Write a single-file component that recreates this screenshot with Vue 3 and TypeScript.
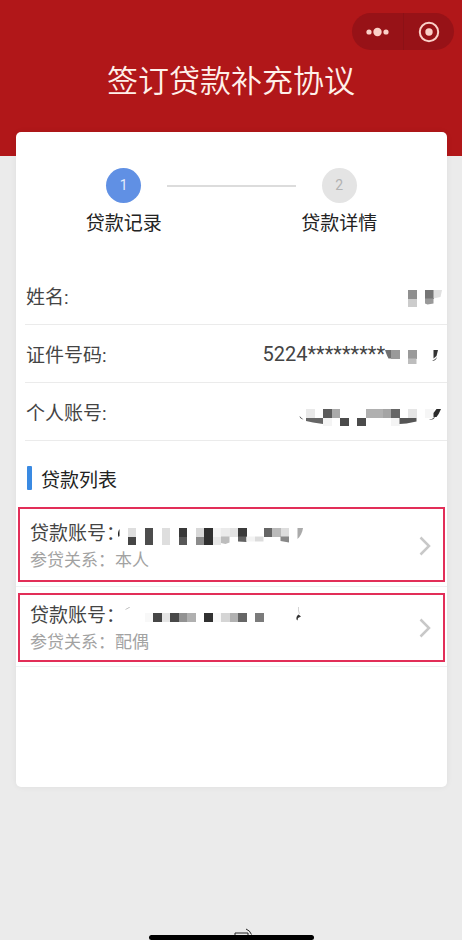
<script setup lang="ts">
interface Cell {
  x: number
  y: number
  w: number
  h: number
  fill: string
}

interface Shape {
  d: string
  fill: string
}

interface Mask {
  width: number
  height: number
  top: number
  cells: Cell[]
  shapes: Shape[]
}

interface Field {
  label: string
  value: string
  mask: Mask
}

interface Loan {
  id: number
  relation: string
  mask: Mask
}

const UNIT = 8.5

// Builds mosaic cells from [x, y, colour, columns] entries.
function cells(list: [number, number, string, number?][]): Cell[] {
  return list.map(([x, y, fill, n = 1]) => ({ x, y, w: UNIT * n, h: UNIT, fill }))
}

const fields: Field[] = [
  {
    label: '姓名:',
    value: '',
    mask: {
      width: 47,
      height: 30,
      top: 6,
      cells: cells([
        [8, 3, '#8f8f8f'],
        [8, 11.5, '#cccccc'],
        [25, 3, '#757575'],
      ]),
      shapes: [
        { d: 'M25 11.5h8.5v5l-6 1-2.5-1z', fill: '#999' },
        { d: 'M33.5 3h8.5l-1.5 7-7 1.5z', fill: '#e0e0e0' },
      ],
    },
  },
  {
    label: '证件号码:',
    value: '5224*********',
    mask: {
      width: 62,
      height: 30,
      top: 6,
      cells: cells([
        [6, 5, '#9a9a9a'],
        [23, 5, '#9a9a9a'],
      ]),
      shapes: [
        { d: 'M0 5h6v8.5H3.5Q2 11 0 5z', fill: '#707070' },
        { d: 'M23 13.5h8.5V19H23z', fill: '#bdbdbd' },
        { d: 'M48.5 5H53l-1.5 6-3 2.500z', fill: '#333' },
        { d: 'M47 16q4-2 5-4-1 4-5 4z', fill: '#444' },
      ],
    },
  },
  {
    label: '个人账号:',
    value: '',
    mask: {
      width: 149,
      height: 30,
      top: 10,
      cells: cells([
        [8, 2, '#e9e9e9'],
        [25, 2, '#5c5c5c'],
        [33.5, 2, '#aaaaaa'],
        [25, 10.5, '#f4f4f4'],
        [42, 10.5, '#4b4b4b'],
        [59, 10.5, '#4b4b4b'],
        [67.5, 2, '#b0b0b0', 2],
        [84.5, 2, '#a4a4a4'],
        [93, 2, '#666666'],
        [93, 10.5, '#f4f4f4'],
        [110, 2, '#e5e5e5'],
        [127, 2, '#f6f6f6'],
      ]),
      shapes: [
        { d: 'M1.5 9q.5 2.5 4 3.5-2-1-4-3.5z', fill: '#222' },
        { d: 'M8 11h17v6l-10-1.5L8 14z', fill: '#666' },
        { d: 'M101.5 11h17v3.5l-10 2-7 .5z', fill: '#555' },
        { d: 'M135.5 10V6l3-4h4.5q-2 5-4.5 8z', fill: '#292929' },
        { d: 'M131 12.5q4-.5 6-3-1 4-6 3z', fill: '#555' },
      ],
    },
  },
]

const loans: Loan[] = [
  {
    id: 1,
    relation: '本人',
    mask: {
      width: 188,
      height: 24,
      top: 6,
      cells: cells([
        [10.5, 0, '#dedede'],
        [10.5, 8.5, '#454545'],
        [27.5, 0, '#4d4d4d'],
        [27.5, 8.5, '#4d4d4d'],
        [44.5, 0, '#dedede'],
        [44.5, 8.5, '#dedede'],
        [61.5, 0, '#393939'],
        [61.5, 8.5, '#585858'],
        [78.5, 0, '#d8d8d8'],
        [78.5, 8.5, '#8b8b8b'],
        [87, 0, '#2f2f2f'],
        [87, 8.5, '#2f2f2f'],
        [95.5, 0, '#f3f3f3'],
        [95.5, 8.5, '#e7e7e7'],
        [104, 0, '#ebebeb'],
        [112.5, 0, '#e3e3e3'],
        [121, 0, '#3b3b3b'],
        [146.5, 0, '#656565'],
        [155, 0, '#bababa'],
        [163.5, 0, '#dddddd'],
      ]),
      shapes: [
        { d: 'M2.5 1Q0 5 1.5 9l1-1z', fill: '#222' },
        { d: 'M104 8.5h8.5v6l-4 1.5-4.5-1z', fill: '#bdbdbd' },
        { d: 'M121 8.5h8.5V14l-8.5-.5z', fill: '#626262' },
        { d: 'M129.5 8.5h8.5v5h-8.5z', fill: '#f3f3f3' },
        { d: 'M138 8.5h8.5v5H138z', fill: '#dcdcdc' },
        { d: 'M163.5 8.5h8.5v6l-8.5-1.5z', fill: '#888' },
        { d: 'M180.5 0h5.5q-1 7-5.5 11z', fill: '#aaa' },
      ],
    },
  },
  {
    id: 2,
    relation: '配偶',
    mask: {
      width: 188,
      height: 24,
      top: 4,
      cells: cells([
        [27.5, 5, '#f8f8f8'],
        [36, 5, '#464646'],
        [44.5, 5, '#e5e5e5'],
        [53, 5, '#494949'],
        [61.5, 5, '#929292'],
        [70, 5, '#b0b0b0'],
        [87, 5, '#313131'],
        [95.5, 5, '#f8f8f8'],
        [104, 5, '#d5d5d5'],
        [112.5, 5, '#b1b1b1'],
        [121, 5, '#666666'],
        [138, 5, '#7b7b7b'],
      ]),
      shapes: [
        { d: 'M8 1.5 12.5-1l.3.5L9 1.5z', fill: '#999' },
        { d: 'M180 8l1.5-1.5 2.5 2-3 1.5-.5 2.5q-2-1-.5-4.5z', fill: '#333' },
        { d: 'M181-1h.5l1 7h-.5z', fill: '#aaa' },
      ],
    },
  },
]
</script>

<template>
  <div class="page">
    <header class="top">
      <div class="capsule">
        <button type="button" class="capsule-btn" aria-label="更多">
          <svg width="24" height="22" viewBox="0 0 24 22">
            <circle cx="4" cy="11" r="2.6" />
            <circle cx="12.5" cy="11" r="4.2" />
            <circle cx="21" cy="11" r="2.6" />
          </svg>
        </button>
        <button type="button" class="capsule-btn" aria-label="关闭">
          <svg width="22" height="22" viewBox="0 0 22 22">
            <circle class="ring" cx="11" cy="11" r="9.2" />
            <circle cx="11" cy="11" r="3.7" />
          </svg>
        </button>
      </div>
      <h1 class="title">签订贷款补充协议</h1>
    </header>

    <main class="card">
      <ol class="steps">
        <li class="step active">
          <span class="dot">1</span>
          <span class="step-name">贷款记录</span>
        </li>
        <li class="line" aria-hidden="true"></li>
        <li class="step">
          <span class="dot">2</span>
          <span class="step-name">贷款详情</span>
        </li>
      </ol>

      <dl class="fields">
        <div v-for="f in fields" :key="f.label" class="field">
          <dt>{{ f.label }}</dt>
          <dd>
            <span v-if="f.value">{{ f.value }}</span>
            <svg
              class="mask"
              :width="f.mask.width"
              :height="f.mask.height"
              :viewBox="`0 ${-f.mask.top} ${f.mask.width} ${f.mask.height}`"
            >
              <rect
                v-for="(c, i) in f.mask.cells"
                :key="i"
                :x="c.x"
                :y="c.y"
                :width="c.w"
                :height="c.h"
                :fill="c.fill"
              />
              <path v-for="(s, i) in f.mask.shapes" :key="'s' + i" :d="s.d" :fill="s.fill" />
            </svg>
          </dd>
        </div>
      </dl>

      <h2 class="section">贷款列表</h2>

      <ul class="loans">
        <li v-for="l in loans" :key="l.id" class="loan-item">
          <a href="#" class="loan">
            <span class="info">
              <span class="account">
                贷款账号：
                <svg
                  class="mask account-mask"
                  :width="l.mask.width"
                  :height="l.mask.height"
                  :viewBox="`0 ${-l.mask.top} ${l.mask.width} ${l.mask.height}`"
                >
                  <rect
                    v-for="(c, i) in l.mask.cells"
                    :key="i"
                    :x="c.x"
                    :y="c.y"
                    :width="c.w"
                    :height="c.h"
                    :fill="c.fill"
                  />
                  <path v-for="(s, i) in l.mask.shapes" :key="'s' + i" :d="s.d" :fill="s.fill" />
                </svg>
              </span>
              <span class="relation">参贷关系：{{ l.relation }}</span>
            </span>
            <svg class="chevron" width="14" height="22" viewBox="0 0 14 22">
              <path d="M2.5 1.5 11 10l-8.5 8.5" />
            </svg>
          </a>
        </li>
      </ul>
    </main>

    <footer class="home">
      <svg class="home-mark" width="20" height="7" viewBox="0 0 20 7">
        <path d="M1 7V5h13v2M12 1q4 1.5 5.5 5.5" />
      </svg>
      <div class="home-bar"></div>
    </footer>
  </div>
</template>

<style>
body {
  margin: 0;
  background: #ebebeb;
}
</style>

<style scoped>
.page {
  display: flex;
  flex-direction: column;
  min-height: 100vh;
  background: #ebebeb;
  color: #444;
  font-family: Roboto, "Noto Sans CJK SC", sans-serif;
  font-size: 19px;
}

.top {
  display: flex;
  flex-direction: column;
  padding: 13px 8px 51px;
  background: #b11719;
}

.capsule {
  display: flex;
  align-self: flex-end;
  width: 102px;
  height: 37px;
  border-radius: 19px;
  background: #971217;
}

.capsule-btn {
  display: flex;
  flex: 1;
  align-items: center;
  justify-content: center;
  padding: 0;
  border: 0;
  background: none;
  fill: #fbd0c8;
}

.capsule-btn + .capsule-btn {
  border-left: 1px solid #8c1116;
}

.ring {
  fill: none;
  stroke: #fbd0c8;
  stroke-width: 2;
}

.title {
  margin: 9px 0 0;
  color: #fff0ea;
  font-size: 31px;
  font-weight: 350;
  line-height: 46px;
  text-align: center;
}

.card {
  margin: -24px 15px 0 16px;
  padding: 36px 0 120px;
  border-radius: 5px;
  background: #fff;
  box-shadow: 0 0 6px rgba(0, 0, 0, 0.06);
}

.steps {
  display: flex;
  justify-content: center;
  margin: 0;
  padding: 0;
  list-style: none;
}

.step {
  display: flex;
  flex: 0 0 20%;
  flex-direction: column;
  align-items: center;
  gap: 7px;
}

.line {
  flex: 0 0 30%;
  height: 2px;
  margin-top: 17px;
  background: #dcdcdc;
}

.dot {
  width: 35px;
  height: 35px;
  border-radius: 50%;
  background: #e4e4e4;
  color: #b2b2b2;
  font-size: 14px;
  line-height: 34px;
  text-align: center;
}

.active .dot {
  background: #6090e4;
  color: #e4edfc;
}

.step-name {
  color: #222;
  line-height: 28px;
  white-space: nowrap;
}

.fields {
  margin: 29px 0 0 9px;
}

.field {
  display: flex;
  align-items: center;
  justify-content: space-between;
  height: 57px;
  padding-left: 1px;
  border-bottom: 1px solid #ebebeb;
}

.field dd {
  display: flex;
  align-items: center;
  margin: 0;
  font-size: 20px;
}

.mask {
  flex: none;
  overflow: visible;
}

.mask rect {
  shape-rendering: crispEdges;
}

.section {
  display: flex;
  align-items: flex-start;
  gap: 9px;
  margin: 25px 0 11px 11px;
  color: #222;
  font-size: 19px;
  font-weight: 400;
  line-height: 30px;
}

.section::before {
  width: 5px;
  height: 24px;
  border-radius: 1px;
  background: #3a8ae2;
  content: "";
}

.loans {
  margin: 0;
  padding: 0;
  list-style: none;
}

.loan-item {
  padding: 0 2px 4px;
  border-bottom: 1px solid #eef1f4;
}

.loan-item + .loan-item {
  padding-top: 6px;
}

.loan {
  display: flex;
  align-items: center;
  justify-content: space-between;
  padding: 11px 11px 7px 10px;
  border: 2px solid #e22e58;
  color: #444;
  text-decoration: none;
}

.loan-item + .loan-item .loan {
  padding-top: 7px;
  padding-bottom: 5px;
}

.info {
  display: flex;
  flex-direction: column;
}

.account {
  display: flex;
  align-items: center;
  line-height: 28px;
}

.account-mask {
  margin-left: -8px;
}

.relation {
  color: #a2a2a2;
  font-size: 17px;
  line-height: 25px;
}

.chevron {
  fill: none;
  stroke: #c8c8c8;
  stroke-width: 2.5;
}

.home {
  display: flex;
  flex-direction: column;
  align-items: center;
  margin-top: auto;
}

.home-mark {
  margin-left: 26px;
  fill: none;
  stroke: #222;
}

.home-bar {
  width: 165px;
  height: 5px;
  border-radius: 3px;
  background: #000;
}
</style>
